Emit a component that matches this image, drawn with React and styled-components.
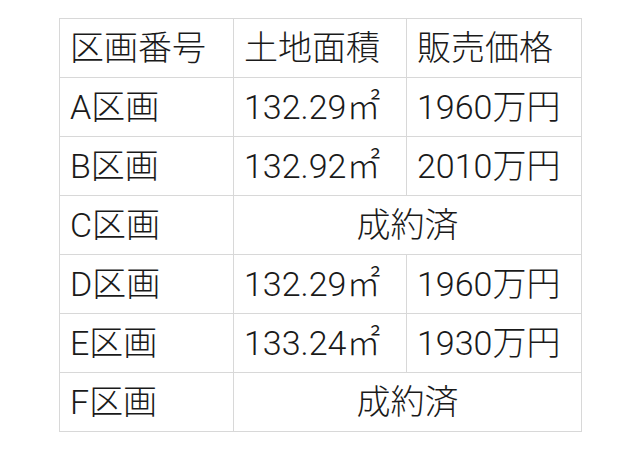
import React from "react";
import styled, { createGlobalStyle } from "styled-components";

const Global = createGlobalStyle`
  html, body { margin: 0; padding: 0; background: #fff; }
  body { font-family: Roboto, "Noto Sans CJK JP", sans-serif; color: #1a1a1a; }
`;

const Page = styled.div`
  padding: 18px 0 0 59px;
`;

const Table = styled.table`
  border-collapse: collapse;
  table-layout: fixed;
  width: 522px;
`;

const Cell = styled.td`
  border: 1px solid #d8d8d8;
  height: 58px;
  padding: 0 0 0 10px;
  font-size: 34px;
  font-weight: 300;
  line-height: 1;
  white-space: nowrap;
  text-align: ${(p) => (p.$center ? "center" : "left")};
  ${(p) => (p.$center ? "padding: 0;" : "")}
`;

const rows = [
  ["区画番号", "土地面積", "販売価格"],
  ["A区画", "132.29㎡", "1960万円"],
  ["B区画", "132.92㎡", "2010万円"],
  ["C区画", null, null],
  ["D区画", "132.29㎡", "1960万円"],
  ["E区画", "133.24㎡", "1930万円"],
  ["F区画", null, null],
];

export default function App() {
  return (
    <>
      <Global />
      <Page>
        <Table>
          <colgroup>
            <col style={{ width: 174 }} />
            <col style={{ width: 173 }} />
            <col style={{ width: 175 }} />
          </colgroup>
          <tbody>
            {rows.map((r) => (
              <tr key={r[0]}>
                <Cell>{r[0]}</Cell>
                {r[1] === null ? (
                  <Cell colSpan={2} $center>
                    成約済
                  </Cell>
                ) : (
                  <>
                    <Cell>{r[1]}</Cell>
                    <Cell>{r[2]}</Cell>
                  </>
                )}
              </tr>
            ))}
          </tbody>
        </Table>
      </Page>
    </>
  );
}
